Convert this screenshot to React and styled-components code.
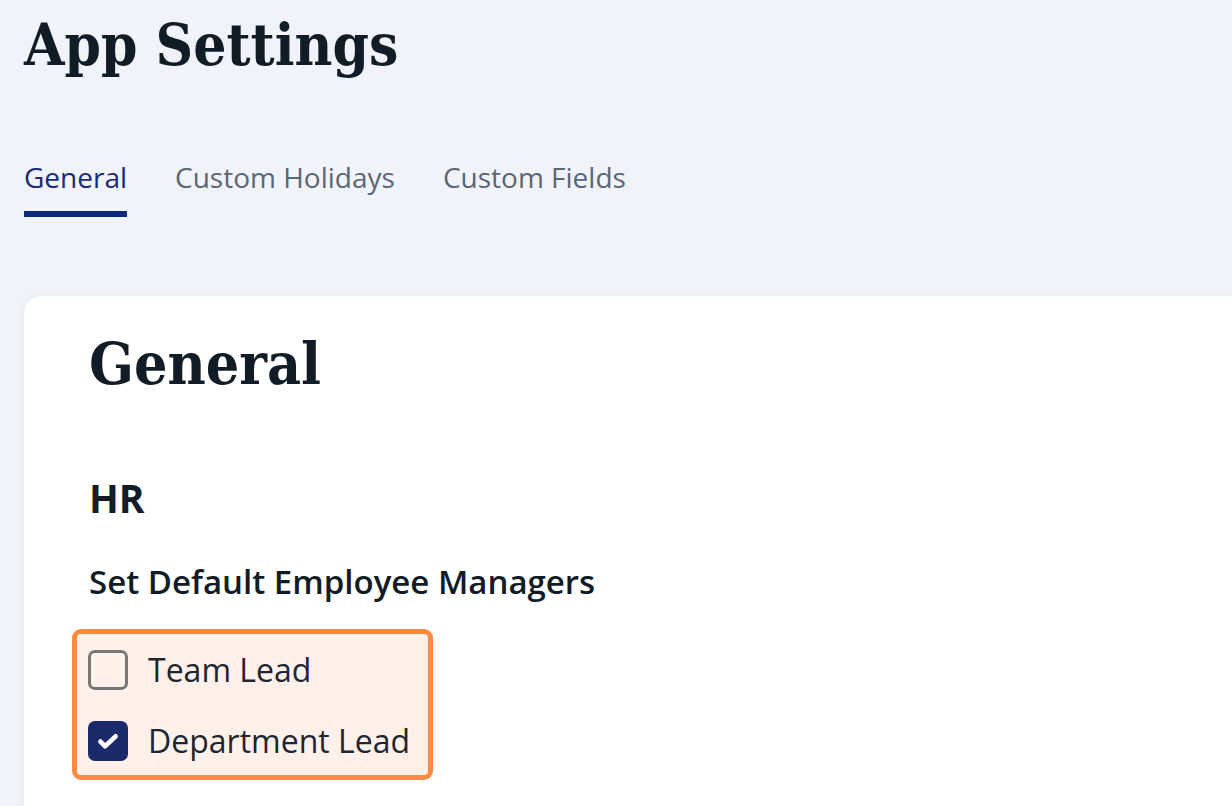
import React from 'react';
import styled, { createGlobalStyle } from 'styled-components';

const GlobalStyle = createGlobalStyle`
  html, body {
    margin: 0;
    padding: 0;
    background: #f0f3fa;
    font-family: 'Open Sans', 'Noto Sans', sans-serif;
    color: #111c27;
  }
`;

const Page = styled.div`
  height: 806px;
  overflow: hidden;
  padding: 12px 0 0 24px;
  box-sizing: border-box;
`;

const Title = styled.h1`
  margin: 0;
  font-family: 'DejaVu Serif', 'Liberation Serif', serif;
  font-stretch: condensed;
  font-weight: 700;
  font-size: 58px;
  line-height: 66px;
  color: #111c27;
`;

const Tabs = styled.nav`
  display: flex;
  gap: 48px;
  margin-top: 79px;
`;

const Tab = styled.div`
  font-size: 28px;
  line-height: 40px;
  padding-bottom: 14px;
  color: ${(p) => (p.$active ? '#1c2a78' : '#5d6673')};
  border-bottom: 6px solid ${(p) => (p.$active ? '#0b2a7d' : 'transparent')};
`;

const Card = styled.section`
  margin-top: 79px;
  width: 1300px;
  background: #ffffff;
  border-radius: 18px;
  box-shadow: 0 2px 10px rgba(30, 50, 90, 0.06);
  padding: 35px 0 60px 65px;
  box-sizing: border-box;
`;

const CardTitle = styled.h2`
  margin: 0;
  font-family: 'DejaVu Serif', 'Liberation Serif', serif;
  font-stretch: condensed;
  font-weight: 700;
  font-size: 58.5px;
  line-height: 66px;
  color: #111c27;
`;

const SectionTitle = styled.h3`
  margin: 78px 0 0;
  font-size: 39px;
  font-weight: 700;
  line-height: 46px;
  color: #111c27;
`;

const FieldLabel = styled.h4`
  margin: 39px 0 0;
  font-size: 33px;
  font-weight: 600;
  line-height: 44px;
  color: #111c27;
`;

const Highlight = styled.div`
  display: inline-flex;
  flex-direction: column;
  gap: 31px;
  margin: 25px 0 0 -17px;
  padding: 16px 18px 14px 11px;
  border: 5px solid #fd8a40;
  border-radius: 9px;
  background: #fff1ea;
`;

const Option = styled.label`
  display: flex;
  align-items: center;
  gap: 20px;
  font-size: 32px;
  line-height: 40px;
  color: #1d2631;
`;

const Box = styled.span`
  width: 40px;
  height: 40px;
  box-sizing: border-box;
  border-radius: 7px;
  border: 3px solid ${(p) => (p.$checked ? '#1b2a6b' : '#777777')};
  background: ${(p) => (p.$checked ? '#1b2a6b' : 'transparent')};
  display: flex;
  align-items: center;
  justify-content: center;
  flex-shrink: 0;
`;

const Check = () => (
  <svg width="28" height="28" viewBox="0 0 24 24" fill="none">
    <path d="M5.5 12.5l4 4L18.5 8" stroke="#ffffff" strokeWidth="4" strokeLinecap="round" strokeLinejoin="round" />
  </svg>
);

const Checkbox = ({ checked, label }) => (
  <Option>
    <Box $checked={checked}>{checked && <Check />}</Box>
    {label}
  </Option>
);

export default function App() {
  return (
    <>
      <GlobalStyle />
      <Page>
        <Title>App Settings</Title>
        <Tabs>
          <Tab $active>General</Tab>
          <Tab>Custom Holidays</Tab>
          <Tab>Custom Fields</Tab>
        </Tabs>
        <Card>
          <CardTitle>General</CardTitle>
          <SectionTitle>HR</SectionTitle>
          <FieldLabel>Set Default Employee Managers</FieldLabel>
          <Highlight>
            <Checkbox label="Team Lead" />
            <Checkbox checked label="Department Lead" />
          </Highlight>
        </Card>
      </Page>
    </>
  );
}
